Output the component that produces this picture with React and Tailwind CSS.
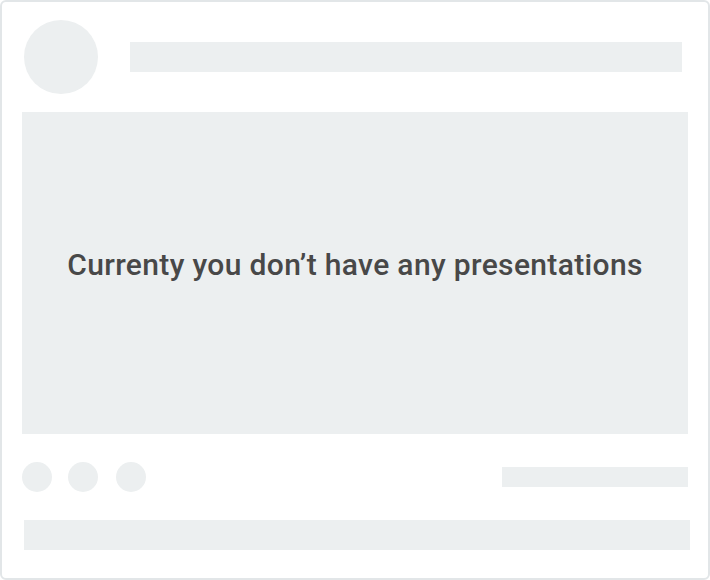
import React from 'react';

const Block = ({ className = '' }) => <div className={`bg-[#eceff0] ${className}`} />;

const App = () => {
  return (
    <div className="w-[710px] h-[580px] bg-white">
      <div className="w-full h-full border-2 border-[#e2e6e8] rounded-[6px] px-[20px] pt-[18px] flex flex-col">
        {/* Header */}
        <div className="flex items-center">
          <Block className="ml-[2px] w-[74px] h-[74px] rounded-full" />
          <Block className="ml-[32px] w-[552px] h-[30px]" />
        </div>

        {/* Empty state */}
        <div className="mt-[18px] w-[666px] h-[322px] pb-[18px] bg-[#eceff0] flex items-center justify-center">
          <p
            className="text-[30px] font-medium tracking-[0.35px] text-[#484848]"
            style={{ fontFamily: 'Roboto, sans-serif' }}
          >
            Currenty you don’t have any presentations
          </p>
        </div>

        {/* Footer row */}
        <div className="mt-[28px] flex items-center">
          <Block className="w-[30px] h-[30px] rounded-full" />
          <Block className="ml-[16px] w-[30px] h-[30px] rounded-full" />
          <Block className="ml-[18px] w-[30px] h-[30px] rounded-full" />
          <Block className="ml-auto w-[186px] h-[20px]" />
        </div>

        <Block className="mt-[28px] ml-[2px] w-[666px] h-[30px]" />
      </div>
    </div>
  );
};

export default App;
